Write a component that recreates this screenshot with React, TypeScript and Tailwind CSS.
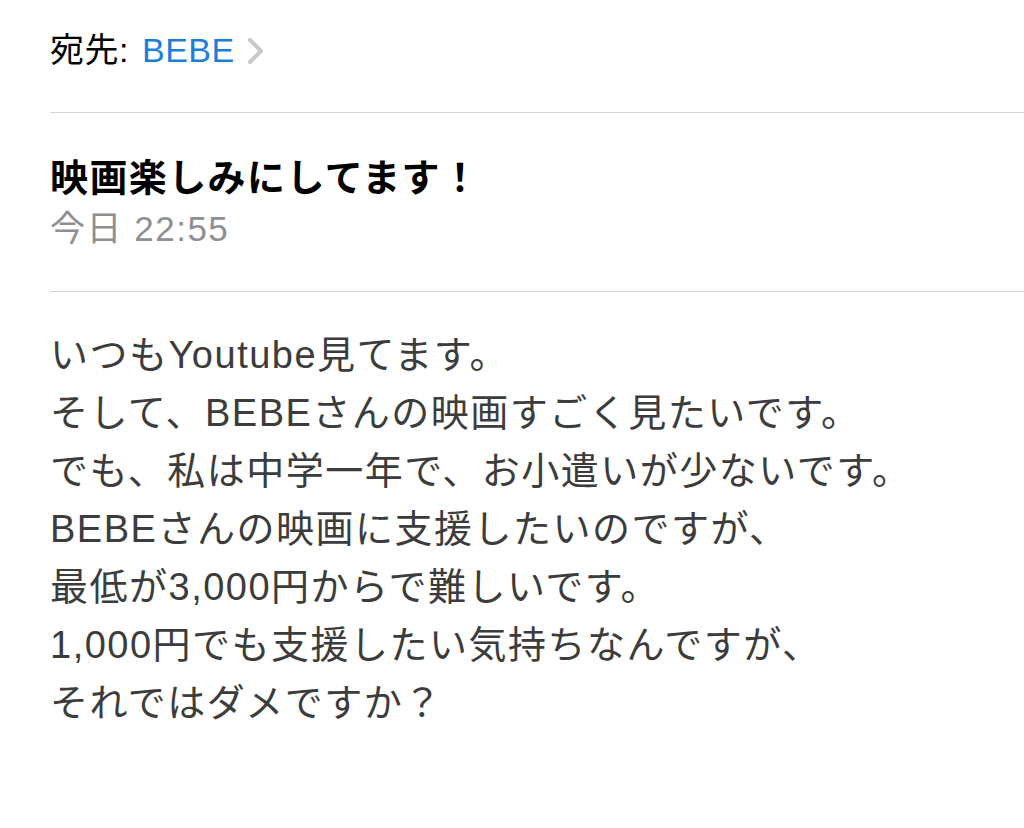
const font = {
  fontFamily: '"Liberation Sans", "Noto Sans CJK JP", sans-serif',
};

const lines = [
  "いつもYoutube見てます。",
  "そして、BEBEさんの映画すごく見たいです。",
  "でも、私は中学一年で、お小遣いが少ないです。",
  "BEBEさんの映画に支援したいのですが、",
  "最低が3,000円からで難しいです。",
  "1,000円でも支援したい気持ちなんですが、",
  "それではダメですか？",
];

export default function App() {
  return (
    <div className="min-h-[828px] w-[1024px] bg-white pl-[50px]" style={font}>
      {/* recipient */}
      <div className="flex h-[112px] items-start pt-[27px] text-[34px] leading-[46px] tracking-[0.5px]">
        <span className="text-black">宛先:</span>
        <span className="ml-[13px] text-[#1c7ddb]">BEBE</span>
        <svg className="ml-[12px] mt-[10px]" width="18" height="28" viewBox="0 0 18 28" fill="none">
          <path d="M3 3 L14 14 L3 25" stroke="#c7c7cc" strokeWidth="4" strokeLinecap="round" strokeLinejoin="round" />
        </svg>
      </div>

      {/* subject + date */}
      <div className="h-[179px] border-t border-[#d4d4d8] pt-[44px]">
        <div className="text-[38px] font-bold leading-[42px] tracking-[1.4px] text-black">映画楽しみにしてます！</div>
        <div className="text-[35px] leading-[60px] tracking-[1.5px] text-[#8e8e93]">今日 22:55</div>
      </div>

      {/* body */}
      <div className="border-t border-[#d4d4d8] pt-[34px] text-[38px] leading-[58px] tracking-[1.5px] text-[#3c3c3c]">
        {lines.map((l, i) => (
          <div key={i}>{l}</div>
        ))}
      </div>
    </div>
  );
}
